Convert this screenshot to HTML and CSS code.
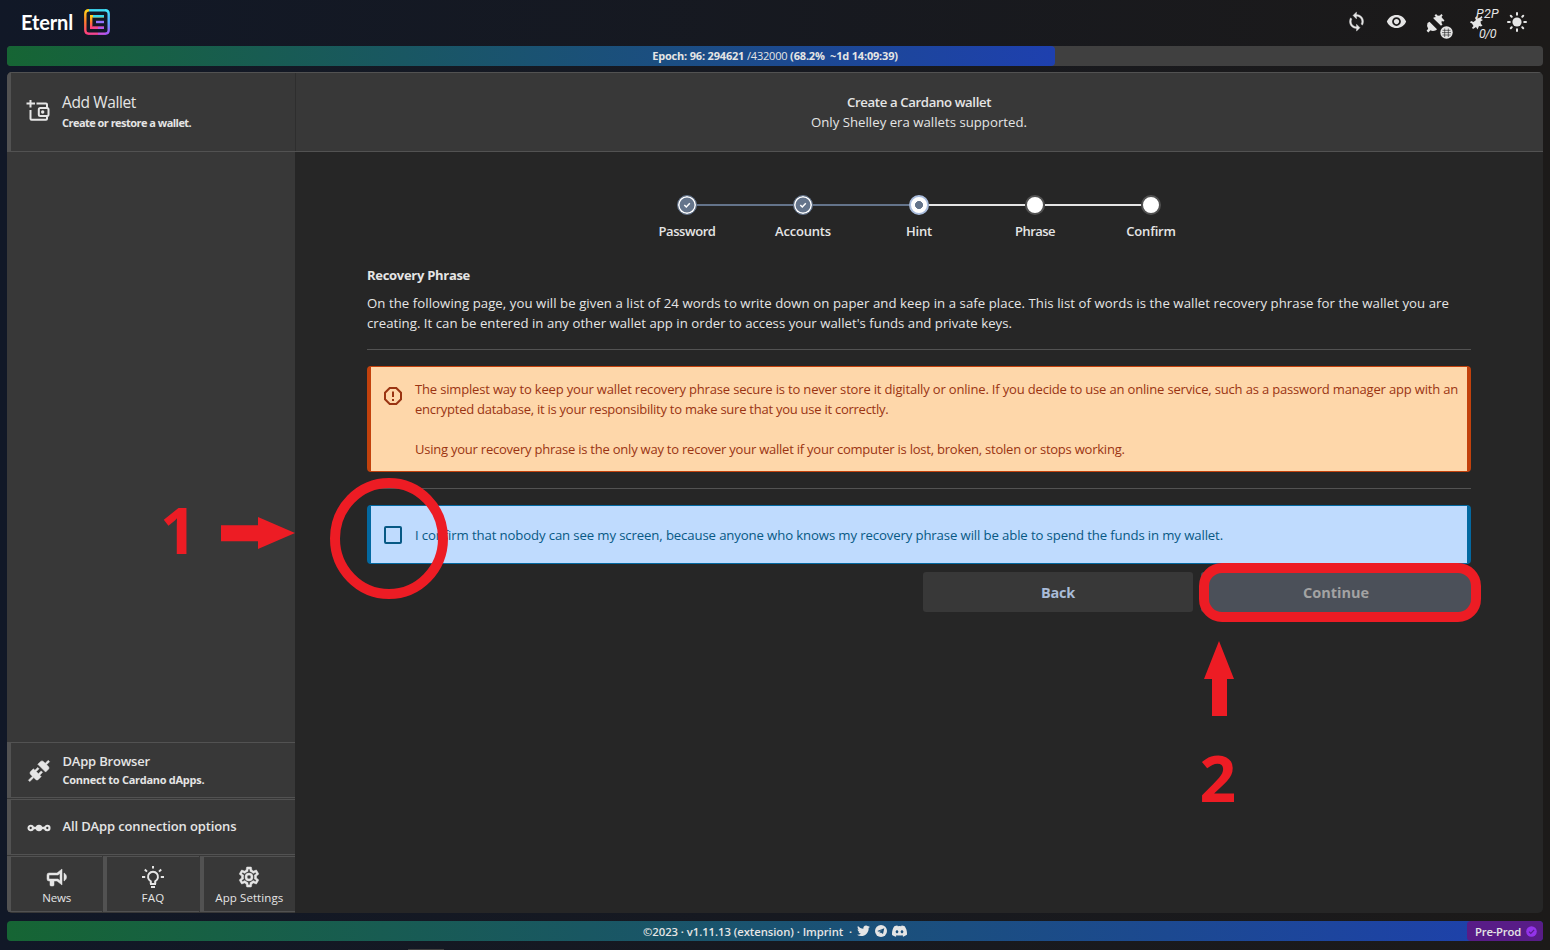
FILE: index.html
```html
<!DOCTYPE html>
<html lang="en">
<head>
<meta charset="utf-8">
<title>Eternl</title>
<link rel="stylesheet" href="styles.css">
</head>
<body>
<svg class="defs" width="0" height="0">
  <defs>
    <linearGradient id="lg1" x1="0" y1="0" x2="0" y2="1"><stop offset="0" stop-color="#3fe8ff"/><stop offset=".5" stop-color="#5aa9ff"/><stop offset="1" stop-color="#a855f7"/></linearGradient>
    <linearGradient id="lg2" x1="0" y1="0" x2="0" y2="1"><stop offset="0" stop-color="#ffd11a"/><stop offset=".5" stop-color="#ff7a2f"/><stop offset="1" stop-color="#ff3d7f"/></linearGradient>
    <symbol id="connect" viewBox="0 0 24 24"><path d="M21.4 7.5C22.2 8.3 22.2 9.6 21.4 10.3L18.6 13.1L10.8 5.3L13.6 2.5C14.4 1.7 15.7 1.7 16.4 2.5L18.2 4.3L21.2 1.3L22.6 2.7L19.6 5.7L21.4 7.5M15.6 13.3L14.2 11.9L11.4 14.7L9.3 12.6L12.1 9.8L10.7 8.4L7.9 11.2L6.4 9.8L3.6 12.6C2.8 13.4 2.8 14.7 3.6 15.4L5.4 17.2L1.4 21.2L2.8 22.6L6.8 18.6L8.6 20.4C9.4 21.2 10.7 21.2 11.4 20.4L14.2 17.6L12.8 16.2L15.6 13.3Z" stroke="#e5e5e5" stroke-width=".5"/></symbol>
  </defs>
</svg>
<div class="app">
  <header class="topbar">
    <div class="brand"><span class="t t-logo">Eternl</span>
      <svg class="logo" width="26" height="26" viewBox="0 0 26 26" fill="none" stroke-width="2.4">
        <path d="M5 1.3H21" stroke="#3fdcf5"/>
        <path d="M21 1.3Q24.7 1.3 24.7 5V21Q24.7 24.7 21 24.7" stroke="url(#lg1)"/>
        <path d="M5 1.3Q1.3 1.3 1.3 5V21Q1.3 24.7 5 24.7" stroke="url(#lg2)"/>
        <path d="M5 24.7H14" stroke="#f0468f"/><path d="M14 24.7H21" stroke="#c455e0"/>
        <path d="M20 7.2L7.2 7.2L7.2 18.8L20 18.8" stroke="url(#lg2)"/>
        <path d="M9 7.2H20" stroke="#38d9ee"/><path d="M9 18.8H14" stroke="#f0468f"/><path d="M14 18.8H20" stroke="#b459ec"/>
        <path d="M12 13H20" stroke="#9673ff"/>
      </svg>
    </div>
    <nav class="tools">
      <svg class="ico" width="21" height="21" viewBox="0 0 24 24"><path d="M12 4V1L8 5l4 4V6c3.31 0 6 2.69 6 6 0 1.01-.25 1.97-.7 2.8l1.46 1.46C19.54 15.03 20 13.57 20 12c0-4.42-3.58-8-8-8zm0 14c-3.31 0-6-2.69-6-6 0-1.01.25-1.97.7-2.8L5.24 7.74C4.46 8.97 4 10.43 4 12c0 4.42 3.58 8 8 8v3l4-4-4-4v3z" stroke="#e5e5e5" stroke-width=".4"/></svg>
      <svg class="ico" width="21" height="21" viewBox="0 0 24 24"><path d="M12 4.5C7 4.5 2.73 7.61 1 12c1.73 4.39 6 7.5 11 7.5s9.27-3.11 11-7.5c-1.73-4.39-6-7.5-11-7.5zM12 17c-2.76 0-5-2.24-5-5s2.24-5 5-5 5 2.24 5 5-2.24 5-5 5zm0-8c-1.66 0-3 1.34-3 3s1.34 3 3 3 3-1.34 3-3-1.34-3-3-3z"/></svg>
      <svg class="ico dapp" width="30" height="30" viewBox="0 0 30 30">
        <path d="M9.500 6.500L12 6L10.500 4.500L12 3L13.800 4.700L16 4.500L17.300 3L18.700 4.300L17.500 6L19 8L20.500 9.300L19.200 10.700L17.800 9.800L17.500 12L18.500 13.500L17 14.800L9.500 7.500Z"/>
        <path d="M3.500 12L5.500 10.800L13 18.300L12 19.300Q8.500 20.600 6.500 19.300L4.300 21.500L2.600 19.800L4.200 17.800Q2.300 15 3.500 12Z"/>
        <circle cx="22.5" cy="21.500" r="6.200"/><path d="M18.500 19.300H26.500M18 21.600H27M18.500 24H26.500M20.700 17.500V26M24.300 17.500V26" stroke="#1b1b1d" stroke-width=".6"/>
      </svg>
      <div class="p2p">
        <svg class="ico" width="14" height="16" viewBox="0 0 14 16"><path d="M5 3L6.500 1L7.500 3.500L10 2.500L11.500 1L12.500 2.200L11 4L13 5L10.500 6.500L11 9L12.500 10.500L11 11.500L9 11L7.500 14.500L6 12L3 14L2 12.800L3.500 11L2 8.500L0 7.500L1 6L3.500 7L6 5Z"/></svg>
        <span class="t t-p2p">P2P</span><span class="t t-p2p low">0/0</span>
      </div>
      <svg class="ico sun" width="20" height="20" viewBox="0 0 20 20"><circle cx="10" cy="10" r="4.600"/><path d="M10 1V2.800M10 17.200V19M1 10H2.800M17.200 10H19M3.800 3.800L4.700 4.700M15.300 15.300L16.200 16.200M3.800 16.200L4.700 15.300M15.300 4.700L16.200 3.800" stroke="#e5e5e5" stroke-width="2" stroke-linecap="round"/></svg>
    </nav>
  </header>
  <div class="epoch"><div class="epoch-fill" style="width:68.25%"></div><div class="epoch-label"><span class="t t-epoch"><b>Epoch: 96: 294621</b> /432000 <b>(68.2% &nbsp;~1d 14:09:39)</b></span></div></div>

  <main class="panel">
    <aside class="side">
      <div class="side-head">
        <svg class="ico" width="24" height="24" viewBox="0 0 24 24" fill="none"><path d="M4.500 1V8.500M.5 4.500H9M10.500 4.500H20Q21 4.500 21 5.500V9M4.500 11V19.800Q4.500 20.800 5.500 20.800H20Q21 20.800 21 19.800V17.500" fill="none" stroke="#e5e5e5" stroke-width="2"/><rect x="12.800" y="9" width="9.700" height="8" rx="1.500" fill="none" stroke="#e5e5e5" stroke-width="2"/><circle cx="16.700" cy="13" r="1.700"/></svg>
        <div class="col"><span class="t t-title">Add Wallet</span><span class="t t-sub restore">Create or restore a wallet.</span></div>
      </div>
      <div class="side-space"></div>
      <div class="side-row">
        <svg class="ico plug" width="24" height="24"><use href="#connect"/></svg>
        <div class="col"><span class="t t-row browser">DApp Browser</span><span class="t t-sub">Connect to Cardano dApps.</span></div>
      </div>
      <div class="side-row">
        <svg class="ico chain" width="24" height="10" viewBox="0 0 24 10"><path d="M3 5H21" stroke="#e5e5e5" stroke-width="2.400"/><circle cx="12" cy="5" r="3.200"/><circle cx="3.700" cy="5" r="2.200" fill="#383838" stroke="#e5e5e5" stroke-width="2.100"/><circle cx="20.300" cy="5" r="2.200" fill="#383838" stroke="#e5e5e5" stroke-width="2.100"/></svg>
        <div class="col"><span class="t t-row all">All DApp connection options</span></div>
      </div>
      <div class="tiles">
        <div class="tile"><svg class="ico" width="24" height="24" viewBox="0 0 24 24"><path d="M12 8H4A2 2 0 0 0 2 10V14A2 2 0 0 0 4 16H5V20A1 1 0 0 0 6 21H8A1 1 0 0 0 9 20V16H12L17 20V4L12 8M15 15.600L13 14H4V10H13L15 8.400V15.600M21.500 12C21.500 13.710 20.540 15.260 19 16V8C20.530 8.750 21.500 10.300 21.500 12Z" stroke="#e5e5e5" stroke-width=".5"/></svg><span class="t t-tile">News</span></div>
        <div class="tile"><svg class="ico" width="24" height="24" viewBox="0 0 24 24"><path d="M9.800 19V16.300A5 5 0 1 1 14.200 16.300V19M9 19H15M10 22H14M12 1V3.500M1 12H4.200M19.800 12H23M3.800 4.500L6 6.600M20.200 4.500L18 6.600" fill="none" stroke="#e5e5e5" stroke-width="2"/></svg><span class="t t-tile faq">FAQ</span></div>
        <div class="tile"><svg class="ico" width="24" height="24" viewBox="0 0 24 24"><path stroke="#e5e5e5" stroke-width=".5" d="M12 8a4 4 0 0 1 4 4 4 4 0 0 1-4 4 4 4 0 0 1-4-4 4 4 0 0 1 4-4m0 2a2 2 0 0 0-2 2 2 2 0 0 0 2 2 2 2 0 0 0 2-2 2 2 0 0 0-2-2m-2 12c-.25 0-.46-.18-.5-.42l-.37-2.650c-.63-.25-1.170-.59-1.690-.99l-2.490 1.010c-.22.080-.49 0-.61-.22l-2-3.460c-.13-.22-.070-.49.120-.64l2.110-1.660L4.500 12l.070-1-2.110-1.630c-.19-.15-.25-.42-.12-.64l2-3.460c.12-.22.390-.31.610-.22l2.490 1c.52-.39 1.060-.73 1.690-.98l.37-2.650c.040-.24.250-.42.500-.42h4c.25 0 .46.180.5.420l.37 2.650c.63.250 1.170.590 1.690.980l2.490-1c.22-.09.490 0 .61.220l2 3.460c.13.220.070.490-.12.640L19.430 11l.07 1-.07 1 2.110 1.630c.19.150.25.420.12.640l-2 3.460c-.12.220-.39.310-.61.220l-2.490-1c-.52.390-1.060.730-1.690.980l-.37 2.650c-.04.240-.25.420-.5.420h-4m1.250-18l-.37 2.610c-1.200.25-2.260.89-3.030 1.780L5.440 7.350l-.75 1.300L6.800 10.200a5.550 5.550 0 0 0 0 3.600l-2.120 1.560.75 1.300 2.430-1.040c.77.880 1.820 1.520 3.010 1.760l.37 2.620h1.520l.37-2.610c1.190-.25 2.240-.89 3.010-1.770l2.430 1.040.75-1.300-2.120-1.550c.4-1.170.4-2.440 0-3.610l2.110-1.550-.75-1.300-2.410 1.040a5.420 5.420 0 0 0-3.030-1.770L12.750 4h-1.500z"/></svg><span class="t t-tile settings">App Settings</span></div>
      </div>
    </aside>

    <section class="content">
      <div class="content-head"><span class="t t-semi">Create a Cardano wallet</span><span class="t t-body">Only Shelley era wallets supported.</span></div>
      <div class="flow">
        <ol class="steps">
          <li class="step done"><span class="dot"><svg width="8" height="8" viewBox="0 0 8 8"><path d="M1.300 4L3.300 6L6.800 2.300" fill="none" stroke="#fff" stroke-width="1.500"/></svg></span><span class="t t-step password">Password</span></li>
          <li class="step done"><span class="dot"><svg width="8" height="8" viewBox="0 0 8 8"><path d="M1.300 4L3.300 6L6.800 2.300" fill="none" stroke="#fff" stroke-width="1.500"/></svg></span><span class="t t-step">Accounts</span></li>
          <li class="step current"><span class="dot"></span><span class="t t-step">Hint</span></li>
          <li class="step"><span class="dot"></span><span class="t t-step phrase">Phrase</span></li>
          <li class="step"><span class="dot"></span><span class="t t-step">Confirm</span></li>
        </ol>
        <h1 class="heading t">Recovery Phrase</h1>
        <p class="para"><span class="t t-body intro">On the following page, you will be given a list of 24 words to write down on paper and keep in a safe place. This list of words is the wallet recovery phrase for the wallet you are</span><br><span class="t t-body intro-end">creating. It can be entered in any other wallet app in order to access your wallet's funds and private keys.</span></p>
        <hr class="rule">
        <div class="note warn">
          <svg width="24" height="24" viewBox="0 0 24 24" fill="none" stroke="#9a3412" stroke-width="2"><path d="M8.700 4H15.300L20 8.700V15.300L15.300 20H8.700L4 15.300V8.700Z"/><path d="M12 7.500V13M12 15V17"/></svg>
          <p><span class="t t-warn first">The simplest way to keep your wallet recovery phrase secure is to never store it digitally or online. If you decide to use an online service, such as a password manager app with an</span><br><span class="t t-warn second">encrypted database, it is your responsibility to make sure that you use it correctly.</span><br><br><span class="t t-warn">Using your recovery phrase is the only way to recover your wallet if your computer is lost, broken, stolen or stops working.</span></p>
        </div>
        <hr class="rule">
        <label class="note info">
          <span class="box"></span><span class="t t-info">I confirm that nobody can see my screen, because anyone who knows my recovery phrase will be able to spend the funds in my wallet.</span>
        </label>
        <div class="actions"><button class="btn back">Back</button><button class="btn next">Continue</button></div>
      </div>
    </section>
  </main>

  <footer class="foot">
    <div class="foot-mid"><span class="t t-foot">©2023 · v1.11.13 (extension) · Imprint &nbsp;·</span>
      <svg width="13" height="12" viewBox="0 0 24 22"><path d="M24 3.100c-.9.400-1.800.7-2.800.8 1-.6 1.800-1.600 2.200-2.700-1 .6-2 1-3.100 1.200A4.900 4.900 0 0 0 11.900 6.900C7.800 6.700 4.200 4.700 1.700 1.700.4 4 1 6.800 3.200 8.200c-.8 0-1.600-.2-2.200-.6-.1 2.300 1.600 4.400 3.900 4.900-.7.200-1.500.2-2.200.1.600 2 2.400 3.400 4.600 3.400A9.900 9.900 0 0 1 0 18 13.900 13.900 0 0 0 7.500 20.200c9.100 0 14.300-7.700 14-14.600 1-.7 1.800-1.500 2.500-2.500z"/></svg>
      <svg width="12" height="12" viewBox="0 0 24 24"><circle cx="12" cy="12" r="12"/><path d="M4.500 12L18.500 6.300L16 18L11.500 15L9.500 17V13.500L15 9L8 13.300Z" fill="#1b4f77"/></svg>
      <svg width="15" height="12" viewBox="0 0 24 18"><path d="M20.300 1.500A19.800 19.800 0 0 0 15.400 0l-.7 1.300a18.300 18.300 0 0 0-5.400 0L8.600 0A19.700 19.700 0 0 0 3.700 1.500C.5 6.200-.3 10.700.1 15.200A19.900 19.900 0 0 0 6.100 18l1.300-2a13 13 0 0 1-1.900-.9l.4-.3a14.200 14.200 0 0 0 12.200 0l.4.3c-.6.400-1.200.7-1.900.9l1.300 2a19.900 19.900 0 0 0 6-2.900c.5-5.200-.9-9.700-3.600-13.600zM8 12.400c-1.200 0-2.200-1.100-2.200-2.400S6.800 7.600 8 7.600s2.200 1.100 2.200 2.400-1 2.400-2.200 2.400zm8 0c-1.200 0-2.200-1.100-2.200-2.400s1-2.400 2.200-2.400 2.200 1.100 2.200 2.400-1 2.400-2.200 2.400z"/></svg>
    </div>
    <div class="net"><span class="t t-net">Pre-Prod</span><svg width="11" height="11" viewBox="0 0 11 11"><circle cx="5.500" cy="5.500" r="5.300" fill="#9333ea"/><path d="M3 5.600L4.800 7.400L8.200 3.800" stroke="#581c87" stroke-width="1.200" fill="none"/></svg></div>
  </footer>
  <div class="edge"></div>
</div>
<svg class="marks" width="1550" height="950" viewBox="0 0 1550 950">
  <g fill="none" stroke="#ed1c24" stroke-width="10"><ellipse cx="389" cy="538.500" rx="54" ry="55.500"/><rect x="1204" y="568" width="272" height="49" rx="18"/></g>
  <g fill="#ed1c24"><path d="M221 525.300H258V517L295 533L258 549V541.300H221Z"/><path d="M1219 641L1234 679H1227V716H1212V679H1204Z"/>
  <text class="mark-num" x="160" y="554">1</text><text class="mark-num" x="1199.500" y="802">2</text></g>
</svg>
</body>
</html>
```
FILE: styles.css
```css
* { box-sizing: border-box; }
body { margin: 0; font-family: "Open Sans", "Noto Sans", sans-serif; color: #e5e5e5; background: #18181b; overflow: hidden; }
.defs { position: absolute; }
.app { width: 1550px; height: 950px; display: flex; flex-direction: column; background: linear-gradient(90deg, #111827, #1c1a19); }
.t { white-space: nowrap; }
.ico { fill: #e5e5e5; flex: none; }

.topbar { height: 46px; display: flex; justify-content: space-between; padding: 0 23px 0 21px; }
.brand { display: flex; align-items: center; gap: 11px; padding-bottom: 2px; }
.logo { flex: none; }
.t-logo { font: 700 20px/24px Lato, sans-serif; letter-spacing: -0.14px; width: 52px; padding-bottom: 1px; color: #fff; }
.tools { display: flex; align-items: center; padding-bottom: 3px; gap: 19px; }
.dapp { margin: 8px -2px 0 -2px; }
.p2p { position: relative; width: 28px; height: 34px; }
.p2p .ico { position: absolute; left: -1px; top: 10px; }
.t-p2p { position: absolute; left: 5px; top: 2px; font: italic 400 12.5px/14px Roboto, sans-serif; letter-spacing: 0.3px; }
.t-p2p.low { left: 8px; top: 22px; letter-spacing: -0.5px; }
.sun { margin-left: -11px; }

.epoch { position: relative; margin: 0 7px; height: 20px; border-radius: 4px; background: #404040; }
.epoch-fill { height: 20px; border-radius: 4px; background: linear-gradient(90deg, #166534, #1e40af); }
.epoch-label { position: absolute; inset: 0; text-align: center; line-height: 20px; font-size: 11px; }
.t-epoch { letter-spacing: -0.18px; }
.t-epoch b { font-weight: 700; }

.panel { margin: 6px 7px 0; height: 841px; display: flex; border-radius: 5px; background: #262626; overflow: hidden; }
.side { flex: none; width: 288px; display: flex; flex-direction: column; background: #383838; gap: 1px; }
.side-head { height: 80px; margin-bottom: -1px; display: flex; align-items: center; gap: 12px; padding: 0 15px; border: 1px solid #525252; border-left-width: 4px; border-right: 0; }
.side-head .ico { margin-top: -3px; }
.col { display: flex; flex-direction: column; align-items: flex-start; }
.side-space { flex: 1; }
.side-row { height: 56px; display: flex; align-items: center; gap: 12px; padding: 0 15.5px; border: solid #525252; border-width: 1px 0 1px 4px; }
.plug { margin-top: 2px; }
.chain { margin-top: 2px; }
.tiles { display: grid; grid-template-columns: repeat(3, 1fr); gap: 1px; height: 57px; padding-bottom: 1px; }
.tile { display: flex; flex-direction: column; align-items: center; padding-top: 8px; border: solid #525252; border-width: 1px 0 1px 4px; }
.t-title { font-size: 15.5px; line-height: 22px; letter-spacing: -0.38px; margin-top: -1px; }
.t-sub { font-size: 11px; line-height: 18px; font-weight: 700; letter-spacing: -0.28px; }
.t-sub.restore { letter-spacing: -0.53px; margin-top: 1px; }
.t-row { font-size: 13px; line-height: 19px; font-weight: 600; }
.t-row.browser { letter-spacing: -0.2px; }
.t-row.all { letter-spacing: -0.13px; margin-top: -2px; }
.t-tile { font-size: 11.5px; line-height: 17px; letter-spacing: -0.13px; }
.t-tile.faq { letter-spacing: 0.28px; }
.t-tile.settings { letter-spacing: 0.08px; }

.content { flex: 1; min-width: 0; display: flex; flex-direction: column; }
.content-head { height: 80px; display: flex; flex-direction: column; align-items: center; justify-content: center; background: #383838; border: solid #525252; border-width: 1px 0; box-shadow: inset 1px 0 #2e2e2e; }
.t-semi { font-size: 13.2px; line-height: 20px; font-weight: 600; letter-spacing: -0.374px; }
.t-body { font-size: 13.2px; line-height: 20px; letter-spacing: 0.012px; }
.t-body.intro { letter-spacing: 0.062px; }
.t-body.intro-end { letter-spacing: 0.022px; }
.flow { padding: 43px 72px 0; }
.steps { list-style: none; margin: 0 auto; padding: 0; display: grid; grid-template-columns: repeat(5, 116px); justify-content: center; }
.step { position: relative; display: flex; flex-direction: column; align-items: center; gap: 6px; }
.step + .step::before { content: ""; position: absolute; right: 68px; top: 9px; width: 96px; height: 2px; background: #e5e5e5; }
.step.done + .step::before { background: #64748b; }
.dot { width: 20px; height: 20px; border-radius: 50%; display: flex; align-items: center; justify-content: center; background: #fff; border: 2px solid #525252; }
.done .dot { background: #64748b; border: 1.5px solid #64748b; box-shadow: inset 0 0 0 1.5px #fff; }
.current .dot { background: radial-gradient(circle, #64748b 3.7px, #fff 4.3px); border-color: #a9bcdc; }
.t-step { font-size: 13px; line-height: 20px; font-weight: 600; letter-spacing: -0.2px; }
.t-step.password { letter-spacing: -0.43px; }
.t-step.phrase { letter-spacing: -0.54px; }
.heading { margin: 24px 0 8px; font-size: 13px; line-height: 20px; font-weight: 700; letter-spacing: -0.29px; }
.para { margin: 0; line-height: 20px; font-size: 13.2px; }
.rule { border: 0; height: 1px; margin: 16px 0; background: #525252; }
.note { display: flex; border-style: solid; border-width: 1px 4px; border-radius: 4px; }
.note p { margin: 0; font-size: 13px; line-height: 20px; }
.warn { height: 106px; padding: 12px 10px; gap: 10px; background: #fed7aa; border-color: #c2410c; color: #9a3412; }
.warn svg { flex: none; margin-top: 5px; }
.t-warn { letter-spacing: -0.228px; }
.t-warn.first { letter-spacing: -0.167px; }
.t-warn.second { letter-spacing: -0.253px; }
.info { height: 59px; align-items: center; gap: 13px; padding: 1px 13px 0; background: #bfdbfe; border-color: #0369a1; color: #075985; }
.box { flex: none; width: 18px; height: 18px; border: 2px solid #075985; border-radius: 2px; }
.t-info { font-size: 13.2px; font-weight: 500; letter-spacing: -0.131px; }
.actions { display: flex; justify-content: flex-end; gap: 8px; margin-top: 8px; }
.btn { width: 270px; height: 40px; border: 0; border-radius: 3px; padding: 2px 0 0; font: 700 14.5px/20px "Open Sans", sans-serif; }
.back { background: #383838; color: #a9bcd8; letter-spacing: -0.24px; }
.next { background: #4b5059; color: #a3a3a3; }

.foot { position: relative; margin: 8px 7px 0; height: 20px; display: flex; justify-content: center; border-radius: 4px; background: linear-gradient(90deg, #166534, #1e40af); }
.foot-mid { display: flex; align-items: center; gap: 5px; }
.foot-mid svg { fill: #e5e5e5; }
.t-foot, .t-net { font-size: 11.3px; line-height: 20px; font-weight: 600; letter-spacing: -0.056px; padding-top: 1px; }
.t-net { letter-spacing: -0.215px; }
.net { position: absolute; right: 0; top: 0; width: 76px; height: 20px; display: flex; align-items: center; gap: 5px; padding-left: 8px; border-radius: 4px; background: #581c87; }
.edge { margin: 8px 0 0 408px; height: 1px; width: 36px; background: #404040; }
.marks { position: absolute; left: 0; top: 0; }
.mark-num { font: 700 64px "Open Sans", sans-serif; }
```
